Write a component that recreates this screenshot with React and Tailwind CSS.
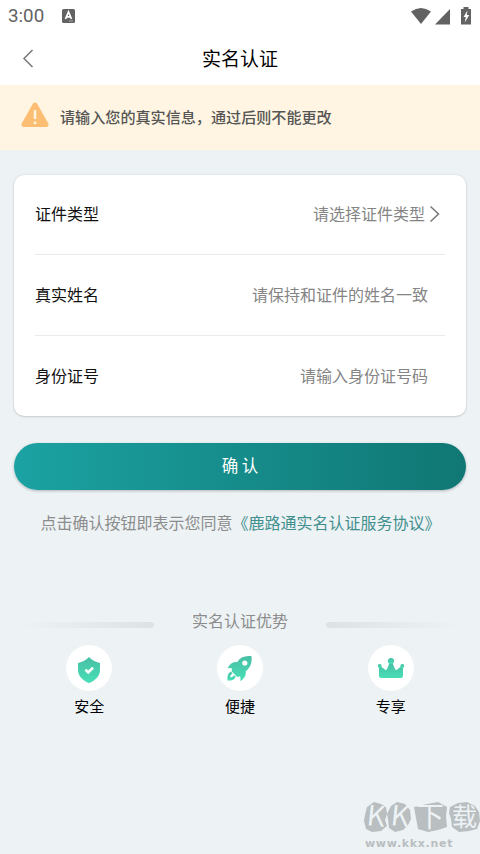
import React from 'react';

const FIELDS = [
    { label: '证件类型', placeholder: '请选择证件类型', select: true },
    { label: '真实姓名', placeholder: '请保持和证件的姓名一致' },
    { label: '身份证号', placeholder: '请输入身份证号码' },
];

function ShieldIcon() {
    return (
        <svg className="mt-[3px]" width="24" height="28" viewBox="0 0 24 28">
            <path d="M12 1C9.500 4 5.500 6 1 7v7c0 6 4.500 9.800 9.500 12.500q1.500.8 3 0C18.500 23.800 23 20 23 14V7C18.500 6 14.500 4 12 1z" fill="url(#mint)" />
            <path d="M8.500 13.700l2.700 2.800 4.800-4.700" fill="none" stroke="#fff" strokeWidth="2.600" />
        </svg>
    );
}

function RocketIcon() {
    return (
        <svg width="27" height="27" viewBox="0 0 28 28">
            <path d="M26.500 1.200c-7-.8-12 1.300-15 6.300-4.500-.8-7.500 1.500-10 6.500 2-.7 3.500-.5 5 .2l-.8 2.600 6 6 2.800-.8c.7 1.500.7 3 .2 5 4.500-2.500 6.300-5.800 5.700-10.200 4.800-3.800 6.800-8.500 6.100-15.600z" fill="url(#mint)" />
            <circle cx="19.500" cy="8.300" r="2.700" fill="#fff" />
            <path d="M5.300 17.300c-3 .9-4 4-3.800 9.200 4.500 0 7.800-1 8.500-4.300l-1.800-1.200c-.5 1.500-1.800 2-3.800 2.200.1-2 .7-3.200 2.300-4z" fill="url(#mint)" />
        </svg>
    );
}

function CrownIcon() {
    return (
        <svg width="28" height="22" viewBox="0 0 28 22">
            <g fill="url(#mint)">
                <path d="M2 9.500h2l4.500 3.500q1 .2 1.500-1l2.500-6h3l2.500 6q.5 1.200 1.500 1L24 9.500h2V19q-.2 2-2 2H4q-1.800 0-2-2z" />
                <circle cx="14" cy="4" r="3.100" />
                <circle cx="2.700" cy="9" r="2" />
                <circle cx="25.300" cy="9" r="2" />
            </g>
        </svg>
    );
}

const ADVANTAGES = [
    { label: '安全', Icon: ShieldIcon },
    { label: '便捷', Icon: RocketIcon },
    { label: '专享', Icon: CrownIcon },
];

function StatusBar() {
    return (
        <div className="flex h-8 items-center pl-2 pr-[8px] text-[#626262]">
            <span className="w-[37px] whitespace-nowrap font-['Roboto',sans-serif] text-[18.8px] leading-8">3:00</span>
            <svg className="ml-[17px]" width="13" height="14" viewBox="0 0 13 14">
                <rect width="13" height="14" rx="1.500" fill="currentColor" />
                <path d="M3.500 10l3-7 3 7M4.700 7.800h3.600" fill="none" stroke="#fff" strokeWidth="1.700" />
                <path d="M7 12h4" stroke="#aaa" />
            </svg>
            <svg className="ml-auto" width="62" height="20" viewBox="0 0 62 20" fill="currentColor">
                <path d="M1 5.500Q11 -1.500 21 5.500L11 18z" />
                <path d="M25 18.500L40 3v15.500z" />
                <path d="M51 3h2.500V1h5v2H61v15.500H51z" />
                <path d="M57.500 4.500l-4 6.500h2.300l-1 5.500 4.500-7.500h-2.500z" fill="#fff" />
            </svg>
        </div>
    );
}

function Watermark() {
    return (
        <div className="absolute bottom-0 right-0 h-[54px] w-[116px]">
            <svg width="116" height="34" viewBox="0 0 116 34" fill="#b9bec1">
                <path d="M3 7l7-5 7 2 5 3 1 7-2 6 2 6-6 5-9 1-6-3-2-8 1-6z" />
                <path d="M27 6l6-4 8 2 5 6 1 9-3 6-5 5-8 2-6-4-1-9-1-5z" />
                <path d="M50 7l13-3 11-2 9 5-1 9 1 11-9 3-10 2-10-3-2-11z" />
                <path d="M86 7l8-4 9-1 8 4 4 6 1 9-3 8-8 2-10 1-7-5-1-8-2-6z" />
            </svg>
            <div className="absolute left-0 top-[-3px] flex whitespace-nowrap text-[25px] leading-[37px] text-[#edf2f5]">
                <span className="w-6 rotate-6 pl-[3px] text-[28px] leading-[34px]">K</span>
                <span className="w-6 rotate-6 pl-[3px] text-[28px] leading-[34px]">K</span>
                <span className="w-[40px] pl-[4px] text-[28px]">下</span>
                <span className="w-[27px]">载</span>
            </div>
            <div className="pl-[1px] font-['DejaVu_Sans',sans-serif] text-[11px] font-bold leading-5 tracking-[0.700px] text-[#b9bec1]">www.kkx.net</div>
        </div>
    );
}

export default function App() {
    return (
        <div className="relative h-[854px] w-[480px] overflow-hidden bg-[#edf2f5] font-['Noto_Sans_CJK_SC',sans-serif]">
            <svg className="absolute" width="0" height="0">
                <linearGradient id="mint" x1="0" y1="0" x2="0" y2="1">
                    <stop offset="0" stopColor="#48bfa5" />
                    <stop offset="1" stopColor="#48dfb6" />
                </linearGradient>
            </svg>

            <header className="h-[85px] bg-white">
                <StatusBar />
                <div className="grid h-[53px] grid-cols-[60px_1fr_60px] items-center">
                    <svg className="ml-[22px]" width="12" height="19" viewBox="0 0 12 19">
                        <path d="M10.500 1L2 9.500l8.500 8.500" fill="none" stroke="#777" strokeWidth="1.500" />
                    </svg>
                    <h1 className="pb-[2px] text-center text-[19px] leading-[51px] text-black">实名认证</h1>
                </div>
            </header>

            <div className="flex h-[65px] items-center bg-[#fff5e2] pl-[21px]">
                <svg className="mb-[5px]" width="28" height="26" viewBox="0 0 28 26">
                    <path d="M14 3L3 22.500h22z" fill="#fcbe72" stroke="#fcbe72" strokeWidth="5" strokeLinejoin="round" />
                    <path d="M14 8v9M14 19.500v2.500" stroke="#fff5e1" strokeWidth="2.500" />
                </svg>
                <p className="ml-[11px] pb-[2px] text-[15.1px] font-medium text-[#555]">请输入您的真实信息，通过后则不能更改</p>
            </div>

            <main className="px-[14px] pt-[25px]">
                <section className="h-[241px] rounded-[10px] bg-white pl-[21px] pr-[21px] shadow-[0_0_2px_rgba(0,0,0,0.15),0_1px_2px_rgba(0,0,0,0.12)]">
                    {FIELDS.map(({ label, placeholder, select }) => (
                        <div key={label} className="h-[81px] border-b border-[#ebebeb] pt-[27px] text-[16px] leading-6 first:h-[80px] first:pt-[26px] last:border-0">
                            <div className="flex items-center">
                                <span className="text-[#111]">{label}</span>
                                <span className={select ? 'ml-auto text-[#858585]' : 'ml-auto mr-[17px] text-[#858585]'}>{placeholder}</span>
                                {select && (
                                    <svg className="ml-1 mr-[5px] mt-[2px]" width="11" height="18" viewBox="0 0 11 18">
                                        <path d="M1.500 1.500L9.500 9l-8 7.500" fill="none" stroke="#777" strokeWidth="1.500" />
                                    </svg>
                                )}
                            </div>
                        </div>
                    ))}
                </section>

                <button className="mt-[27px] block h-[47px] w-full rounded-full bg-linear-to-r from-[#1ba2a2] to-[#107774] pb-[2px] text-[16.500px] text-white shadow-[0_1px_3px_rgba(0,0,0,0.25)]">
                    确 认
                </button>

                <p className="mt-[20px] whitespace-nowrap pl-[26.500px] text-[16px] leading-6 text-[#8c8c8c]">
                    点击确认按钮即表示您同意<span className="text-[#42908e]">《鹿路通实名认证服务协议》</span>
                </p>
            </main>

            <section className="mt-[74px]">
                <div className="flex items-center justify-center gap-[38px] text-[16px] leading-6 text-[#8c8c8c]">
                    <div className="mt-[9px] h-[6px] w-[134px] rounded-full bg-linear-to-r from-transparent to-[#dfe2e4]" />
                    <h2>实名认证优势</h2>
                    <div className="mt-[9px] h-[6px] w-[134px] rounded-full bg-linear-to-l from-transparent to-[#dfe2e4]" />
                </div>
                <div className="mt-[13px] grid grid-cols-3 px-[14px]">
                    {ADVANTAGES.map(({ label, Icon }) => (
                        <div key={label} className="flex flex-col items-center">
                            <div className="flex size-[46px] items-center justify-center rounded-full bg-white">
                                <Icon />
                            </div>
                            <span className="mt-[3px] text-[15px] leading-6 text-black">{label}</span>
                        </div>
                    ))}
                </div>
            </section>

            <Watermark />
        </div>
    );
}
